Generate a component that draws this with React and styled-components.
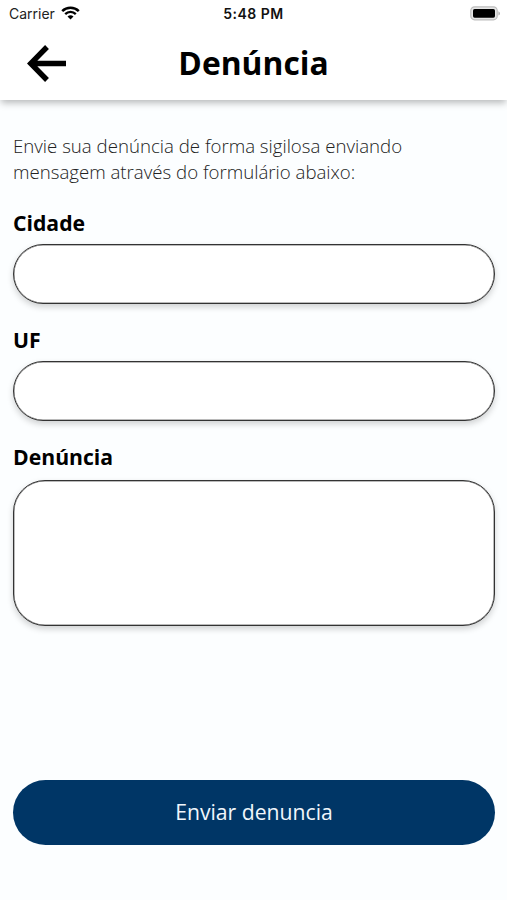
import React, {useState} from 'react';
import styled, {createGlobalStyle} from 'styled-components';

const App = () => {
  const [city, setCity] = useState('');
  const [uf, setUf] = useState('');
  const [report, setReport] = useState('');

  return (
    <Screen>
      <GlobalStyle/>
      <Header>
        <StatusBar>
          <Carrier>
            Carrier
            <WifiIcon/>
          </Carrier>
          <Clock>5:48 PM</Clock>
          <BatteryIcon/>
        </StatusBar>
        <TitleBar>
          <BackButton type="button" aria-label="Voltar">
            <ArrowIcon/>
          </BackButton>
          <Title>Denúncia</Title>
        </TitleBar>
      </Header>
      <Form onSubmit={(event) => event.preventDefault()}>
        <Description>
          Envie sua denúncia de forma sigilosa enviando<br/>
          mensagem através do formulário abaixo:
        </Description>
        <Label htmlFor="city">Cidade</Label>
        <Input
          id="city"
          value={city}
          onChange={(event) => setCity(event.target.value)}
        />
        <Label htmlFor="uf">UF</Label>
        <Input
          id="uf"
          value={uf}
          onChange={(event) => setUf(event.target.value)}
        />
        <Label htmlFor="report">Denúncia</Label>
        <TextArea
          id="report"
          value={report}
          onChange={(event) => setReport(event.target.value)}
        />
        <SubmitButton type="submit">Enviar denuncia</SubmitButton>
      </Form>
    </Screen>
  );
};

const WifiIcon = () => (
  <svg width="19" height="14" viewBox="0 0 19 14" fill="none" stroke="#000">
    <path d="M1.2 5.1a11.8 11.8 0 0 1 16.6 0" strokeWidth="2.5"/>
    <path d="M4.2 8.1a7.5 7.5 0 0 1 10.6 0" strokeWidth="2.3"/>
    <path d="M9.5 13.6 6.5 10.6a4.3 4.3 0 0 1 6 0z" fill="#000" stroke="none"/>
  </svg>
);

const BatteryIcon = () => (
  <svg width="31" height="15" viewBox="0 0 31 15">
    <rect x="0.8" y="0.8" width="26.4" height="13" rx="3.8" fill="#e6e6e6" stroke="#bdbdbd" strokeWidth="1.2"/>
    <rect x="3" y="2.9" width="22" height="8.8" rx="1.6" fill="#000"/>
    <path d="M28.4 5.2c2.2 1 2.2 3.4 0 4.4z" fill="#b5b5b5"/>
  </svg>
);

const ArrowIcon = () => (
  <svg width="40" height="37" viewBox="0 0 40 37" fill="none" stroke="#000" strokeWidth="5.4">
    <path d="M20 2 3.7 18.5 20 35M4 18.5H39"/>
  </svg>
);

export default App;

const GlobalStyle = createGlobalStyle`
  * {
    box-sizing: border-box;
  }

  body {
    margin: 0;
    background: #fcfeff;
    font-family: 'Open Sans', 'Noto Sans', sans-serif;
    color: #000;
  }
`;

const Screen = styled.div`
  display: flex;
  flex-direction: column;
  height: 900px;
  background: #fcfeff;
`;

const Header = styled.header`
  height: 100px;
  background: #fff;
  box-shadow: 0 4px 7px -1px rgba(0, 0, 0, 0.27);
`;

const StatusBar = styled.div`
  display: grid;
  grid-template-columns: 1fr auto 1fr;
  align-items: center;
  height: 27px;
  padding: 0 6px 0 9px;
  font-family: Inter, 'Liberation Sans', sans-serif;
  font-size: 14px;

  > svg {
    justify-self: end;
  }
`;

const Carrier = styled.div`
  display: flex;
  align-items: center;
  gap: 6px;
  color: #222;

  svg {
    margin-top: -2px;
  }
`;

const Clock = styled.div`
  margin-right: 3px;
  font-weight: 600;
  letter-spacing: 0.5px;
  color: #111;
`;

const TitleBar = styled.div`
  display: grid;
  grid-template-columns: 1fr auto 1fr;
  align-items: center;
  height: 72px;
`;

const BackButton = styled.button`
  display: flex;
  justify-self: start;
  margin-left: 27px;
  padding: 0;
  border: 0;
  background: none;
  cursor: pointer;
`;

const Title = styled.h1`
  margin: 0;
  font-size: 31.8px;
  font-weight: 700;
  line-height: 44px;
`;

const Form = styled.form`
  display: flex;
  flex-direction: column;
  flex: 1;
  padding: 33px 12px 55px 13px;
`;

const Description = styled.p`
  margin: 0 0 23px;
  font-size: 18.65px;
  font-weight: 300;
  line-height: 26px;
  color: #222;
`;

const Label = styled.label`
  height: 30px;
  margin-bottom: 6px;
  font-size: 21.2px;
  font-weight: 700;
  line-height: 30px;
`;

const Input = styled.input`
  flex: none;
  height: 60px;
  margin: 0 0 21px;
  padding: 0 24px;
  border: 1px solid #333;
  border-radius: 30px;
  background: #fff;
  box-shadow: inset 0 0 0 0.5px #777, 0 3px 6px rgba(0, 0, 0, 0.18);
  font: 300 18.65px 'Open Sans', sans-serif;
  outline: none;
`;

const TextArea = styled.textarea`
  height: 146px;
  margin: 2px 0 0;
  padding: 18px 24px;
  border: 1px solid #333;
  border-radius: 32px;
  background: #fff;
  box-shadow: inset 0 0 0 0.5px #777, 0 3px 6px rgba(0, 0, 0, 0.18);
  font: 300 18.65px 'Open Sans', sans-serif;
  outline: none;
  resize: none;
`;

const SubmitButton = styled.button`
  height: 65px;
  margin-top: auto;
  padding: 0 0 2px;
  border: 0;
  border-radius: 33px;
  background: #003666;
  color: #f0f6fc;
  font: 400 21.2px 'Open Sans', sans-serif;
  cursor: pointer;
`;
